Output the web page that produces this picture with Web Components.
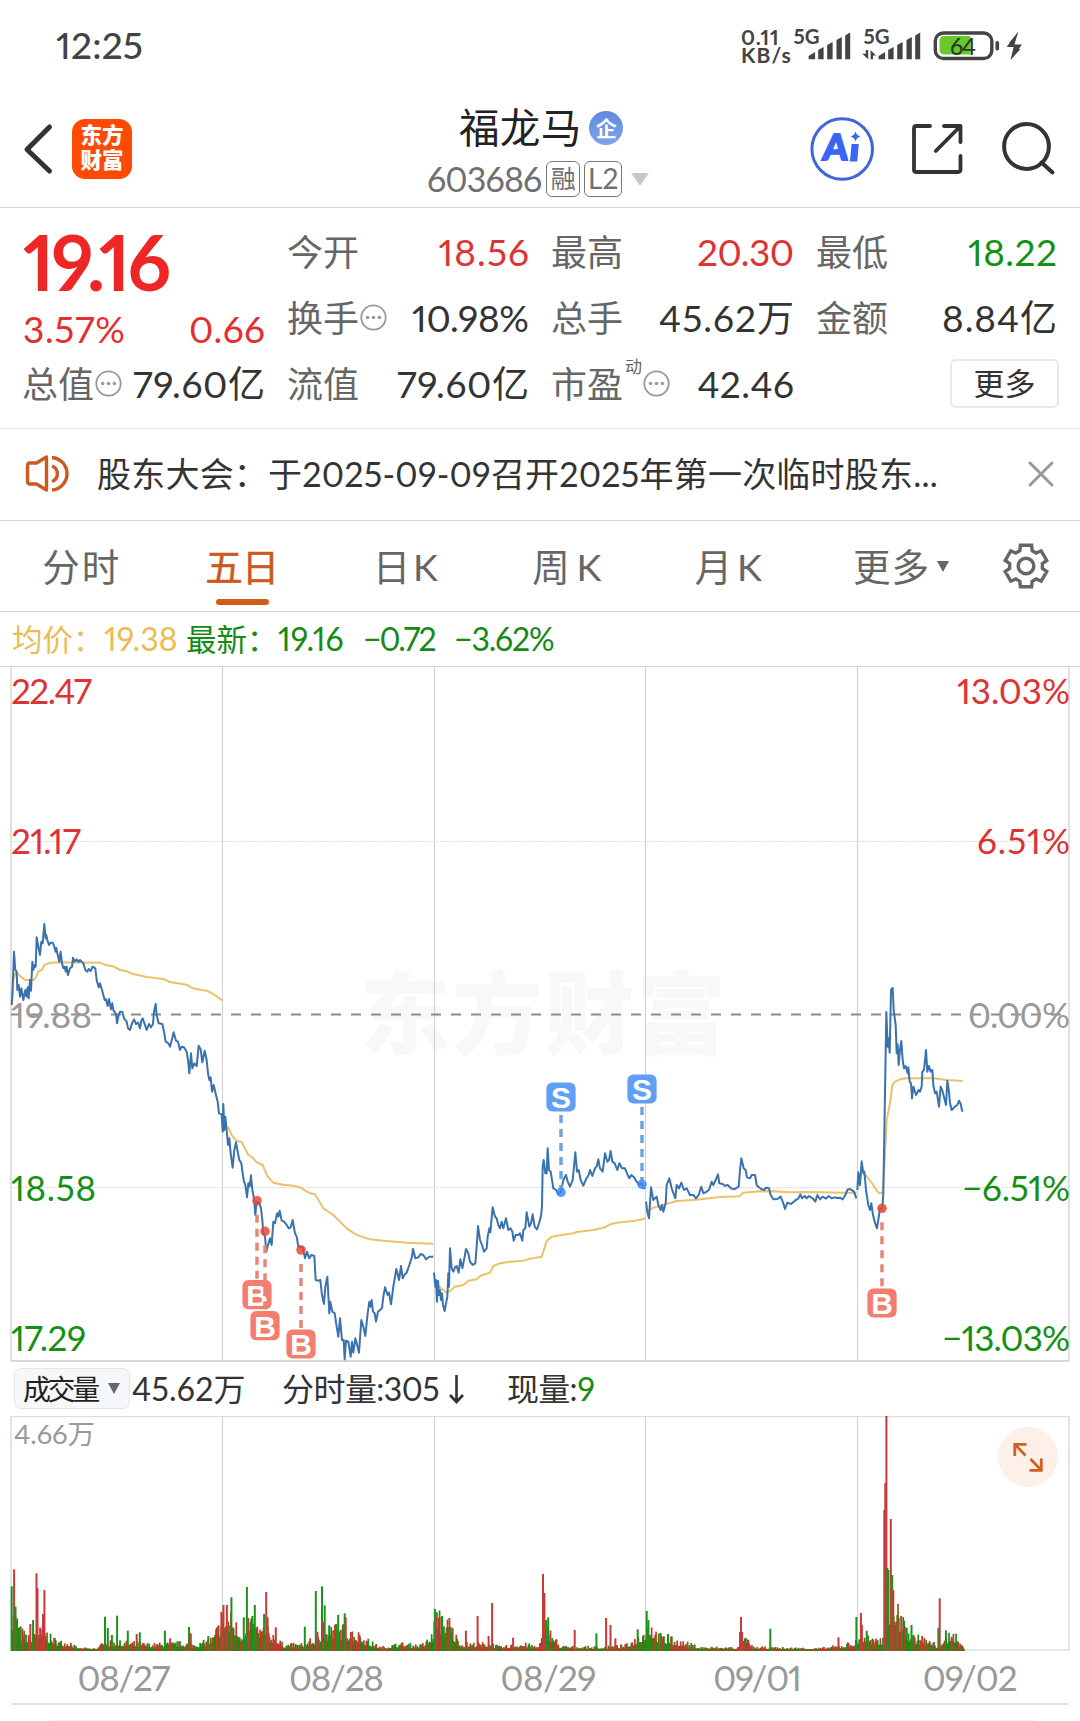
<!DOCTYPE html>
<html lang="zh-CN">
<head>
<meta charset="utf-8">
<title>福龙马 603686</title>
<style>
html,body{margin:0;padding:0;background:#fff}
body{width:1080px;height:1721px;overflow:hidden;font-family:Lato,"Noto Sans CJK SC",sans-serif;font-variant-numeric:proportional-nums;color:#333}
</style>
</head>
<body>
<stock-page></stock-page>
<script>
/* Text whose tracking is adjusted until its ink spans w pixels. */
customElements.define('fit-text', class extends HTMLElement{
  constructor(){super();this.attachShadow({mode:'open'}).innerHTML='<style>:host{display:inline-block;white-space:nowrap}</style><slot></slot>';}
  connectedCallback(){
    const w=+this.getAttribute('w'); if(!w) return;
    const fs=parseFloat(getComputedStyle(this).fontSize);
    const n=[...this.textContent].length;
    const d=(w+fs*0.08-this.getBoundingClientRect().width)/Math.max(1,n-1);
    this.style.letterSpacing=d+'px'; this.style.marginRight=(-d)+'px';
  }
});
function define(name,html,after){
  const t=document.createElement('template'); t.innerHTML=html;
  customElements.define(name,class extends HTMLElement{
    constructor(){super();this.attachShadow({mode:'open'});}
    connectedCallback(){ if(this.shadowRoot.childNodes.length) return;
      this.shadowRoot.append(document.importNode(t.content,true)); if(after) after(this.shadowRoot,this);}
  });
}

define('info-dots',`<style>:host{display:block;width:27px;height:27px;flex:none}svg{display:block}</style>
<svg width="27" height="27"><circle cx="13.5" cy="13.5" r="12.2" fill="none" stroke="#999" stroke-width="1.8"/><g fill="#999"><circle cx="7.6" cy="13.5" r="1.8"/><circle cx="13.5" cy="13.5" r="1.8"/><circle cx="19.4" cy="13.5" r="1.8"/></g></svg>`);

define('status-bar',`<style>
:host{display:flex;height:92px;align-items:center;box-sizing:border-box;padding:0 57px 0 56px;justify-content:space-between;color:#444}
.t{font-size:37px;font-weight:500;line-height:90px;height:92px}
.r{display:flex;align-items:center}
.kb{display:flex;flex-direction:column;align-items:flex-start;width:51px;font-size:21px;font-weight:700;line-height:18.5px}
svg{display:block}
text{font-family:Lato;font-weight:700}
</style>
<div class="t"><fit-text w="84">12:25</fit-text></div>
<div class="r"><div class="kb"><fit-text w="36">0.11</fit-text><fit-text w="48">KB/s</fit-text></div>
<svg width="231" height="92" viewBox="792 0 231 92"><g fill="#444">
<text x="793.5" y="44" font-size="20" textLength="26" lengthAdjust="spacingAndGlyphs">5G</text>
<text x="863.5" y="44" font-size="20" textLength="26" lengthAdjust="spacingAndGlyphs">5G</text>
<path id="b" d="M808.6 59.3V56l6.5-4V59.3ZM818.2 59.3V50l5.4-3V59.3ZM827.2 59.3V45l5.4-3V59.3ZM836.5 59.3V40l5.3-3V59.3ZM845.2 59.3V35.5l5-3V59.3Z"/>
<path transform="translate(70 0)" d="M808.6 59.3V56l6.5-4V59.3ZM818.2 59.3V50l5.4-3V59.3ZM827.2 59.3V45l5.4-3V59.3ZM836.5 59.3V40l5.3-3V59.3ZM845.2 59.3V35.5l5-3V59.3Z"/>
<path d="M865.8 50h2.4v9.3l-6-5.5h3.6ZM870.6 59.3V50l5.4 5.5h-3v3.8Z"/></g>
<rect x="935.3" y="33" width="56.5" height="25.5" rx="8" fill="#fff" stroke="#444" stroke-width="3.4"/>
<path d="M970.5 36H944a4.5 4.5 0 0 0-4.5 4.500V50a4.500 4.500 0 0 0 4.500 4.500H970.500Z" fill="#69c92c"/>
<rect x="995.5" y="41" width="3.600" height="9.500" rx="1.800" fill="#444"/>
<text x="950" y="54.500" font-size="23.500" style="font-weight:500" textLength="26" fill="#2b3a20">64</text>
<path d="M1018 32 1006.600 47h7l-3 13L1022 44.500h-7.500Z" fill="#444"/><path d="M1018.500 32 1009 43h5ZM1010.500 60l10-11h-6Z" fill="#444"/></svg></div>`);

define('top-bar',`<style>
:host{display:grid;grid-template-columns:300px 1fr 300px;height:116px;box-sizing:border-box;border-bottom:1.500px solid #d4d4d4}
svg{display:block}
.l{display:flex;align-items:center;padding-left:22px;gap:19px;padding-bottom:2px}
.logo{width:60px;height:60px;border-radius:13px;background:#ff4a05;color:#fff;font-weight:900;font-size:21.500px;line-height:24.500px;display:flex;flex-direction:column;align-items:center;justify-content:center;box-sizing:border-box;padding-bottom:2px;margin-left:-1px}
.c{display:flex;flex-direction:column}
.n{display:flex;align-items:center;height:46px;margin-top:13px;padding-left:159px;gap:8px;font-size:40.500px;color:#222;line-height:46px}
.q{width:34px;height:34px;border-radius:50%;background:linear-gradient(#6288df,#7ea4ea);color:#fff;font-size:21px;font-weight:700;line-height:33px;text-align:center}
.k{display:flex;align-items:center;height:38px;margin-top:9px;padding-left:127px;font-size:34px;color:#707070;line-height:38px;width:240px}
.g{height:36px;box-sizing:border-box;border:1.500px solid #777;border-radius:6px;line-height:33px;text-align:center;flex:none}
.r1{width:34px;font-size:25px;margin-left:4px}.r2{width:38px;font-size:28px;margin-left:4px}
.tri{border:9.500px solid transparent;border-top:13px solid #c9c9c9;border-bottom:0;margin-left:9px}
.r{display:flex;align-items:center;padding-left:29px;padding-bottom:2px}
text{font-family:"Noto Sans CJK SC";font-weight:900}
</style>
<div class="l"><svg width="32" height="52" viewBox="22 123 32 52"><path d="M49.500 127 27 149.500 49.500 171" fill="none" stroke="#333" stroke-width="5" stroke-linecap="round" stroke-linejoin="round"/></svg>
<div class="logo"><span>东方</span><span>财富</span></div></div>
<div class="c"><div class="n"><fit-text w="119">福龙马</fit-text><div class="q">企</div></div>
<div class="k"><fit-text w="112.500">603686</fit-text><div class="g r1">融</div><div class="g r2">L2</div><div class="tri"></div></div></div>
<div class="r"><svg width="250" height="70" viewBox="809 114 250 70" fill="none">
<circle cx="842.200" cy="149" r="30.300" stroke="#4166dc" stroke-width="3"/>
<text x="821.500" y="160.500" font-size="36" fill="#3966f5" stroke="#3966f5" stroke-width="1.800" style="font-family:Lato" transform="translate(14.500 0) skewX(-5)" textLength="25" lengthAdjust="spacingAndGlyphs">A</text>
<path d="M851.600 144h7.200l-1.600 17.500h-7.300Z" fill="#3966f5"/><path d="M855.500 131.500q1 4 5 5-4 1-5 5-1-4-5-5 4-1 5-5Z" fill="#3966f5"/>
<g stroke="#333" stroke-width="3.800" stroke-linecap="round" stroke-linejoin="round"><path d="M930 126H916.500Q914 126 914 128.500V170Q914 172 916.500 172H958Q960.500 172 960.500 169.500V156"/><path d="M944 126H960.500V142M960 126.500 935.800 151"/></g>
<g stroke="#333" stroke-width="4"><circle cx="1026.500" cy="146.500" r="22.400"/><path d="M1041.500 162.500 1052.500 172.500" stroke-linecap="round"/></g></svg></div>`);

define('quote-cell',`<style>
:host{display:flex;align-items:center;height:66px;line-height:66px;font-size:37px;color:#333;justify-content:space-between}
.l{display:flex;align-items:center;font-size:36px;color:#666;margin-left:-1px}
sup{font-size:17px;line-height:20px;align-self:flex-start;margin:6px 0 0 2px}
info-dots{margin:-2px 0 0 1px}
</style><div class="l"><span id="n"></span></div><slot></slot>`,(r,h)=>{
  r.getElementById('n').textContent=h.getAttribute('label');
  const l=r.querySelector('.l');
  if(h.hasAttribute('sup')) l.insertAdjacentHTML('beforeend','<sup>'+h.getAttribute('sup')+'</sup>');
  if(h.hasAttribute('dots')) l.insertAdjacentHTML('beforeend','<info-dots></info-dots>');
});

define('quote-board',`<style>
:host{display:grid;grid-template-columns:242px 241px 242px 240px;column-gap:23px;grid-template-rows:66px 66px 66px;padding:11px 0 10px 23px;height:221px;box-sizing:border-box;border-bottom:1px solid #e8e8e8}
.p{grid-row:1/3;grid-column:1;display:flex;flex-direction:column;color:#e23030}
.big{font-size:76px;font-weight:700;color:#ee2626;line-height:86px;height:81px}
.s{display:flex;justify-content:space-between;font-size:37px;line-height:58px}
.red{color:#dc3434}.green{color:#149014}
.m{display:flex;justify-content:flex-end;align-items:center;padding-bottom:1px}
.m div{width:109px;height:49px;box-sizing:border-box;border:2px solid #e9e9e9;border-radius:6px;text-align:center;font-size:31px;line-height:44px;color:#333;margin-right:-2px}
</style>
<div class="p"><div class="big"><fit-text w="142">19.16</fit-text></div><div class="s"><fit-text w="99">3.57%</fit-text><fit-text w="73">0.66</fit-text></div></div>
<quote-cell label="今开"><fit-text class="red" w="87.500">18.56</fit-text></quote-cell>
<quote-cell label="最高"><fit-text class="red" w="94">20.30</fit-text></quote-cell>
<quote-cell label="最低"><fit-text class="green" w="86">18.22</fit-text></quote-cell>
<quote-cell label="换手" dots><fit-text w="114">10.98%</fit-text></quote-cell>
<quote-cell label="总手"><fit-text w="132">45.62万</fit-text></quote-cell>
<quote-cell label="金额"><fit-text w="112">8.84亿</fit-text></quote-cell>
<quote-cell label="总值" dots><fit-text w="129">79.60亿</fit-text></quote-cell>
<quote-cell label="流值"><fit-text w="129">79.60亿</fit-text></quote-cell>
<quote-cell label="市盈" sup="动" dots><fit-text w="93.500">42.46</fit-text></quote-cell>
<div class="m"><div>更多</div></div>`);

define('notice-bar',`<style>
:host{display:flex;align-items:center;height:92px;box-sizing:border-box;border-bottom:1.500px solid #d6d6d6;padding:0 25px 2px 24px;font-size:34px;line-height:88px;color:#333}
.t{flex:1;padding-left:25px}svg{display:block}
</style><svg width="48" height="42" viewBox="24 453 48 42" fill="none" stroke="#cc5a20" stroke-width="3.400" stroke-linejoin="round"><path d="M46.500 457V490L36.500 484H30Q27.500 484 27.500 481V466Q27.500 463 30 463H36.500Z"/><path d="M52 457.500A16.300 16.300 0 0 1 52 490M52 466A8.300 8.300 0 0 1 52 481.500"/></svg>
<div class="t"><fit-text w="838">股东大会：于2025-09-09召开2025年第一次临时股东...</fit-text></div>
<svg width="28" height="28"><path d="M3 3 25 25M25 3 3 25" stroke="#999" stroke-width="3" stroke-linecap="round"/></svg>`);

define('period-tabs',`<style>
:host{display:flex;height:91px;box-sizing:border-box;border-bottom:1.500px solid #d6d6d6;font-size:37.500px;line-height:89px;color:#666}
div{width:161.500px;display:flex;justify-content:center;align-items:center;flex:none;position:relative}
.on{color:#cc5a1c;-webkit-text-stroke:.5px #cc5a1c}
.on::after{content:"";position:absolute;left:54px;top:78px;width:53px;height:5.500px;border-radius:3px;background:#d05c1a}
.w{padding-left:3px;box-sizing:border-box}
i{border:6.500px solid transparent;border-top:11px solid #666;border-bottom:0;margin-left:8px}
.m{width:187px}svg{display:block;margin:20px 0 0 7px}
</style><div><fit-text w="74">分时</fit-text></div><div class="on"><fit-text w="71">五日</fit-text></div><div class="w"><fit-text w="62">日K</fit-text></div><div class="w"><fit-text w="66">周K</fit-text></div><div class="w"><fit-text w="64">月K</fit-text></div><div class="m"><fit-text w="73">更多</fit-text><i></i></div>
<svg width="48" height="50" viewBox="-24 -25 48 50" fill="none" stroke="#666" stroke-width="3.400"><circle r="7.800"/><path id="g"/></svg>`,r=>{
  // Six-toothed gear outline
  let d='';
  for(let i=0;i<6;i++){const a=i*60;
    for(const [o,q] of [[-22,16.500],[-15,21.500],[15,21.500],[22,16.500]]){
      const t=(a+o-90)*Math.PI/180; d+=(d?'L':'M')+(q*Math.cos(t)).toFixed(2)+' '+(q*Math.sin(t)).toFixed(2);}}
  r.getElementById('g').setAttribute('d',d+'Z');
});

define('avg-legend',`<style>
:host{display:flex;height:55px;box-sizing:border-box;border-bottom:1.500px solid #d6d6d6;font-size:32px;line-height:54px;color:#168a16;padding-left:12px}
.a{color:#ebbc55;width:174px;display:flex}.b{width:177px;display:flex}.c{width:91px}
.k{font-size:30.500px;width:92px}
</style><div class="a"><span class="k">均价：</span><fit-text w="71">19.38</fit-text></div><div class="b"><span class="k">最新：</span><fit-text w="63">19.16</fit-text></div><div class="c"><fit-text w="71">−0.72</fit-text></div><div><fit-text w="98">−3.62%</fit-text></div>`);

define('price-chart',`<style>:host{display:block;height:695px}svg{display:block}
text{font-family:Lato,"Noto Sans CJK SC",sans-serif;font-size:35px}
.o path{fill:none;stroke:#ecc268;stroke-width:6;stroke-linejoin:round}
.l path{fill:none;stroke:#3a72ae;stroke-width:6;stroke-linejoin:round}
.r{fill:#dc3434}.g{fill:#149014}.y{fill:#999}
</style>
<svg width="1080" height="695" viewBox="0 667 1080 695">
<text x="360" y="1047" style="font-size:90px;font-weight:900" fill="#f8f8f8" textLength="366">东方财富</text>
<path d="M11 667V1361M1069 667V1361" stroke="#dedede" stroke-width="1.800"/>
<path d="M222.500 667V1361M434.500 667V1361M645.500 667V1361M857.500 667V1361" stroke="#d2d2d2" stroke-width="1.200"/>
<path d="M11 841.500H1069M11 1187.500H1069" stroke="#d4d4d4" stroke-width="1" stroke-dasharray="1.500 1.500"/>
<path d="M11 1361H1069" stroke="#d8d8d8" stroke-width="2"/>
<path d="M11 1014.500H1069" stroke="#8c8c8c" stroke-width="2" stroke-dasharray="10 10"/>
<g class="o">
<path transform="translate(0 900) scale(.33333)" d="M35 312 40 240 48 215 60 228 75 240 100 240 108 232 115 215 125 210 133 195 150 189 170 187 300 188 320 196 340 199 360 210 380 214 400 222 440 231 490 237 510 246 560 254 575 263 600 269 620 272 640 282 655 293 667 301M684 680 695 705 708 722 725 726 745 765 758 773 770 787 788 795 803 830 820 848 850 854 880 857 900 862 930 880 945 883 970 925 1000 945 1020 965 1040 985 1070 1005 1110 1018 1150 1022 1220 1028 1300 1031"/>
<path transform="translate(430 940) scale(.33333)" d="M20 1030 30 1042 50 1058 60 1052 75 1040 100 1035 115 1022 140 1018 150 1008 180 998 190 978 210 970 240 965 280 962 300 956 335 950 340 935 350 903 365 890 400 884 430 880 440 876 490 870 525 862 540 853 570 847 610 843 645 836M655 812 670 803 700 795 722 788 740 783 800 779 870 771 928 769 940 758 990 754 1040 754"/>
<path transform="translate(740 960) scale(.33333)" d="M50 694 100 694 150 697 200 696 349 699M374 642 385 655 400 675 415 698 428 700 433 620 440 480 450 430 457 375 465 365 480 358 500 355 580 355 620 360 668 363"/></g>
<g class="l">
<path transform="translate(0 900) scale(.33333)" d="M35 315 37 290 42 155 46 210 50 215 52 270 56 255 60 290 64 265 70 300 76 270 80 290 83 262 86 295 90 240 93 272 97 185 100 210 104 195 107 200 110 112 115 140 120 165 124 125 128 130 133 72 137 115 139 106 142 120 147 135 152 128 158 128 163 140 167 155 169 144 172 160 178 185 182 155 186 190 190 205 194 200 197 215 200 200 204 225 210 205 216 200 219 173 224 185 230 178 235 186 240 180 250 190 256 210 262 215 266 207 272 213 278 200 286 205 290 240 296 262 300 250 306 270 314 300 318 298 323 318 327 297 333 328 337 310 340 330 348 342 351 370 356 345 360 335 367 335 372 355 380 365 384 385 390 390 396 370 402 358 408 372 414 368 420 385 424 362 428 355 434 372 440 390 447 372 453 382 459 372 462 335 467 312 470 345 476 370 487 372 493 400 497 425 505 430 510 440 514 425 521 397 528 422 534 425 540 450 545 440 552 442 560 455 564 480 568 520 573 460 577 505 583 490 590 498 596 437 602 448 607 487 614 452 620 480 624 520 628 540 632 532 636 575 641 555 648 585 653 605 657 640 665 643 668 695 670 612 673 690 676 650 680 690 684 735 688 715 692 760 698 803 703 750 708 727 713 755 718 780 724 790 728 820 732 845 736 855 741 892 745 850 749 860 753 826 757 870 762 895 766 945 770 905 778 910 783 925 787 960 790 1000 795 1010 799 1055 804 1035 810 1015 815 1035 820 965 825 970 831 940 835 950 839 932 845 962 852 965 860 975 866 985 872 982 878 960 885 1000 890 1010 895 1040 900 1040 908 1040 915 1075 921 1055 928 1075 934 1065 943 1068 947 1140 953 1142 961 1140 966 1185 972 1212 976 1160 982 1130 988 1240 991 1205 997 1235 1004 1240 1010 1280 1015 1310 1020 1255 1026 1320 1031 1320 1034 1378 1038 1322 1045 1325 1052 1370 1056 1325 1060 1358 1066 1315 1070 1330 1077 1358 1084 1260 1090 1280 1096 1308 1103 1240 1108 1205 1112 1220 1115 1200 1119 1235 1124 1240 1128 1265 1134 1235 1146 1225 1150 1190 1155 1162 1163 1185 1167 1178 1173 1213 1180 1160 1189 1107 1197 1140 1203 1098 1208 1135 1213 1125 1220 1118 1228 1095 1236 1070 1239 1047 1246 1075 1255 1072 1262 1062 1270 1065 1278 1078 1288 1070 1300 1070"/>
<path transform="translate(430 940) scale(.33333)" d="M12 998 16 1040 18 1020 21 1085 24 1022 27 1065 30 1050 33 1080 36 1060 39 1095 44 1113 48 1090 52 1070 55 1000 57 1040 60 925 65 985 70 995 75 982 80 978 86 998 91 958 97 985 103 955 108 927 115 940 120 965 128 975 136 970 140 920 144 858 150 900 156 915 162 935 170 925 173 890 178 865 181 877 188 802 195 830 200 835 205 855 210 865 215 845 220 865 228 835 235 870 242 865 247 875 251 902 257 885 265 885 270 880 277 902 280 870 286 865 290 817 298 860 303 850 308 823 314 860 321 868 327 850 333 828 336 800 338 680 341 660 346 700 350 700 353 625 357 690 362 695 370 745 378 750 385 762 393 755 400 720 408 705 413 725 420 740 428 720 431 690 436 637 441 695 446 690 452 720 460 737 468 718 476 705 480 690 487 708 495 685 500 680 505 658 510 685 518 695 525 640 532 665 537 660 542 633 547 665 554 670 562 690 568 670 576 685 585 685 593 705 598 715 604 705 612 712 620 725 628 735 636 730 640 745 646 745M648 785 652 815 657 835 663 742 670 780 680 770 685 795 692 810 696 795 700 815 707 790 710 735 718 715 725 745 736 775 740 735 747 745 754 728 762 750 770 745 780 765 790 765 798 775 806 765 814 740 820 760 830 755 838 748 845 725 850 735 857 720 864 703 868 730 878 732 884 737 893 735 903 745 912 748 926 740 930 690 934 655 941 685 947 690 951 712 960 715 965 705 975 705 980 735 990 745"/>
<path transform="translate(740 960) scale(.33333)" d="M60 685 72 690 78 683 87 685 92 705 100 718 112 717 122 710 130 730 135 747 142 728 153 732 165 722 175 715 181 703 186 715 194 708 200 715 207 708 218 715 226 725 232 705 240 718 248 710 258 716 266 708 275 715 284 712 292 714 300 713 308 718 316 705 323 688 332 688 342 695 349 715M352 690 355 637 360 675 365 604 370 640 373 635 378 690 385 735 390 750 394 730 399 765 404 785 411 805 415 780 420 745 427 745 430 700 439 156 443 260 446 235 449 278 453 90 458 84 461 150 467 195 470 280 473 253 476 315 480 270 484 243 488 300 492 325 497 318 503 340 505 322 509 365 513 370 516 415 520 380 528 405 536 390 540 395 545 380 547 335 552 330 558 270 562 335 567 318 572 335 577 330 580 375 585 400 590 395 597 440 602 380 608 395 618 435 622 362 627 395 630 430 635 450 645 440 652 435 657 422 662 432 667 455"/></g>
<g id="m"></g>
<g>
<text class="r" x="11" y="704" textLength="81">22.47</text><text class="r" x="11" y="854" textLength="70">21.17</text><text class="y" x="11" y="1027.500" textLength="81">19.88</text><text class="g" x="11" y="1200.700" textLength="85">18.58</text><text class="g" x="11" y="1350.500" textLength="75">17.29</text>
<text class="r" x="957" y="704" textLength="113">13.03%</text><text class="r" x="977" y="854" textLength="93">6.51%</text><text class="y" x="968" y="1027.500" textLength="102">0.00%</text><text class="g" x="962" y="1200.700" textLength="108">−6.51%</text><text class="g" x="942" y="1350.500" textLength="128">−13.03%</text></g>
</svg>`,r=>{
  // Trade markers: letter, x, dot y, centre of the box
  const T=[['B',257,1200.700,1294.700],['B',265,1231.300,1325.700],['B',301,1250,1344],['S',561,1192.300,1097],['S',642,1184.300,1089],['B',882,1208.300,1303]];
  let s='';
  for(const [c,x,d,b] of T){
    const k=c==='B'?['#e9463b','#e98477','#f37e6f']:['#3d8af5','#6fa3e0','#619ff5'];
    const y1=c==='B'?d+14:b+18, y2=c==='B'?b-15:d-4;
    s+=`<path d="M${x} ${y1}V${y2}" stroke="${k[1]}" stroke-width="3.500" stroke-dasharray="8 6"/><rect x="${x-14.600}" y="${b-14.600}" width="29.200" height="29.200" rx="6" fill="${k[2]}"/><circle cx="${x}" cy="${d}" r="4.800" fill="${k[0]}" fill-opacity=".85"/><text x="${x}" y="${b+10.800}" text-anchor="middle" style="font:700 30px 'Liberation Sans'" fill="#fff">${c}</text>`;
  }
  r.getElementById('m').innerHTML=s;
});

define('volume-head',`<style>
:host{display:flex;height:54px;align-items:center;padding-left:14px;font-size:32px;line-height:52px;color:#333;box-sizing:border-box;padding-bottom:1px}
.b{width:116px;height:41px;box-sizing:border-box;border:1.500px solid #e4e5ea;border-radius:7px;background:#f6f7fb;display:flex;align-items:center;padding-left:8px;font-size:28px;color:#222;margin-right:2px}
i{border:6.500px solid transparent;border-top:11px solid #666;border-bottom:0;margin-left:8px}
.c{width:150px}.d{width:225px;display:flex;align-items:center}b{font-weight:400;color:#168a16}
svg{display:block;margin-left:8px}
</style><div class="b"><fit-text w="75">成交量</fit-text><i></i></div><div class="c"><fit-text w="111">45.62万</fit-text></div><div class="d"><fit-text w="155">分时量:305</fit-text><svg width="18" height="32"><path d="M8.500 2V29M2 22 8.500 29 15 22" fill="none" stroke="#333" stroke-width="2.600"/></svg></div><div><fit-text w="68">现量:</fit-text><b>9</b></div>`);

define('volume-chart',`<style>:host{display:block;height:235px}svg{display:block}text{font-family:Lato,"Noto Sans CJK SC",sans-serif}</style>
<svg width="1080" height="235" viewBox="0 1416 1080 235"><path d="M11 1416.500H1069M11 1416V1651M1069 1416V1651M11 1650H1069" stroke="#dedede" stroke-width="1.600" fill="none"/>
<path d="M222.500 1416V1650M434.500 1416V1650M645.500 1416V1650M857.500 1416V1650" stroke="#d2d2d2" stroke-width="1.200"/>
<g id="v"></g>
<text x="14" y="1443.500" font-size="27.500" fill="#999" textLength="81">4.66万</text>
<circle cx="1028" cy="1457" r="30" fill="#fdf0e8"/><path d="M1026.500 1444.300H1014.800V1456M1015 1444.500 1025.500 1455.500M1029.500 1470.300H1041.300V1458.500M1041 1470 1030.500 1459" fill="none" stroke="#d06024" stroke-width="2.800"/></svg>`,r=>{
  let seed=7; const rnd=()=>(seed=(seed*16807)%2147483647)/2147483647;
  // Typical bar height along x
  const E=[[11,40],[14,42],[20,22],[30,12],[34,22],[45,22],[50,14],[60,10],[70,10],[76,3],[95,3],[104,9],[130,9],[150,7],[185,9],[190,8],[200,8],[212,14],[222,38],[232,34],[240,20],[250,28],[262,24],[272,18],[282,7],[300,7],[318,14],[330,24],[345,24],[358,18],[370,9],[380,4],[400,8],[420,6],[430,14],[436,38],[446,30],[452,22],[460,8],[490,8],[500,4],[520,8],[538,5],[545,28],[552,16],[560,5],[600,4],[625,6],[636,14],[650,30],[658,16],[680,10],[700,4],[740,4],[745,14],[752,4],[820,3],[840,6],[855,10],[864,18],[874,10],[882,14],[886,40],[896,50],[902,30],[912,16],[930,10],[940,4],[950,22],[960,8],[963,3]];
  const env=x=>{for(let i=1;i<E.length;i++)if(x<=E[i][0]){const a=E[i-1],b=E[i];return a[1]+(b[1]-a[1])*(x-a[0])/(b[0]-a[0]);}return 2;};
  const G='#129012',R='#d03030',X='#8a5a18'; let s='';
  const bar=(x,h,c,w)=>{s+=`<rect x="${x.toFixed(1)}" y="${(1651-h).toFixed(1)}" width="${w||1.700}" height="${h.toFixed(1)}" fill="${c}"/>`;};
  for(let x=11;x<963.500;x+=.88){
    const e=env(x),q=rnd(),c=rnd();
    bar(x,Math.max(2,e*(.45+.75*q*q)),c<.42?G:c<.72?R:X);
  }
  const S='34,679,g 41,628,r 45,740,g 59,801,g 88,792,r 96,780,g 106,640,r 109,684,r 125,762,r 129,690,r 305,770,g 313,804,g 325,825,g 340,767,g 371,812,g 397,822,r 406,817,g 479,812,g 494,835,r 549,801,g 554,820,r 605,828,g 643,755,r 649,735,r 659,735,r 672,712,g 708,772,g 717,681,g 721,774,r 733,768,g 740,735,g 767,762,g 773,696,r 777,772,r 801,802,r 885,800,g 917,693,g 922,815,r 935,679,g 938,786,r 943,736,g 956,796,g 976,792,g 982,765,g 1001,760,g 1004,772,r 1019,816,r 1044,825,r 1263,747,g 1267,768,r 1284,768,g 1305,774,r 1309,801,g 1353,812,r 1387,768,r 1429,729,r 1419,828,r 1490,833,r'.split(' ').concat(
    '1577,642,r 1581,699,r 1586,780,g 1592,772,g 1669,810,r 1732,820,g 1760,774,r 1773,795,r 1787,835,r 1852,808,g 1878,753,g 1883,780,g 1918,820,g 1940,822,g 2152,771,r 2155,816,r 2149,816,r 2237,806,g 2435,832,r 2487,771,g 2500,759,r 2503,795,r 2517,812,g 2568,450,r 2571,369,r 2574,168,r 2577,624,g 2580,630,g 2587,477,r 2591,645,g 2594,690,r 2607,786,r 2617,768,r 2647,795,g 2678,828,r 2725,803,g 2729,715,r 2747,811,g 2764,836,r'.split(' '));
  for(const t of S){const [x,y,c]=t.split(',');bar(x/2.904-1,(873-y)/3,c==='g'?'#1c921c':'#c83a3a',2);}
  r.getElementById('v').innerHTML=s;
});

define('date-axis',`<style>
:host{display:block;height:70px}
div{display:flex;margin:0 11px;height:54px;box-sizing:border-box;border-bottom:2px solid #e2e2e2;font-size:35px;line-height:52px;color:#999}
span{width:211.600px;text-align:center;box-sizing:border-box;flex:none}
p{margin:15px 44px 0 50px;height:2px;background:#fdf0e8}
</style><div><span style="padding-left:14px"><fit-text w="90">08/27</fit-text></span><span style="padding-left:16px"><fit-text w="92">08/28</fit-text></span><span style="padding-left:17px"><fit-text w="93">08/29</fit-text></span><span style="padding-left:12px"><fit-text w="86">09/01</fit-text></span><span style="padding-left:14px"><fit-text w="92">09/02</fit-text></span></div><p></p>`);

define('stock-page',`<style>:host{display:flex;flex-direction:column;width:1080px;height:1721px;overflow:hidden;background:#fff}:host>*{flex:none}</style>
<status-bar></status-bar><top-bar></top-bar><quote-board></quote-board><notice-bar></notice-bar><period-tabs></period-tabs><avg-legend></avg-legend><price-chart></price-chart><volume-head></volume-head><volume-chart></volume-chart><date-axis></date-axis>`);
</script>
</body>
</html>
